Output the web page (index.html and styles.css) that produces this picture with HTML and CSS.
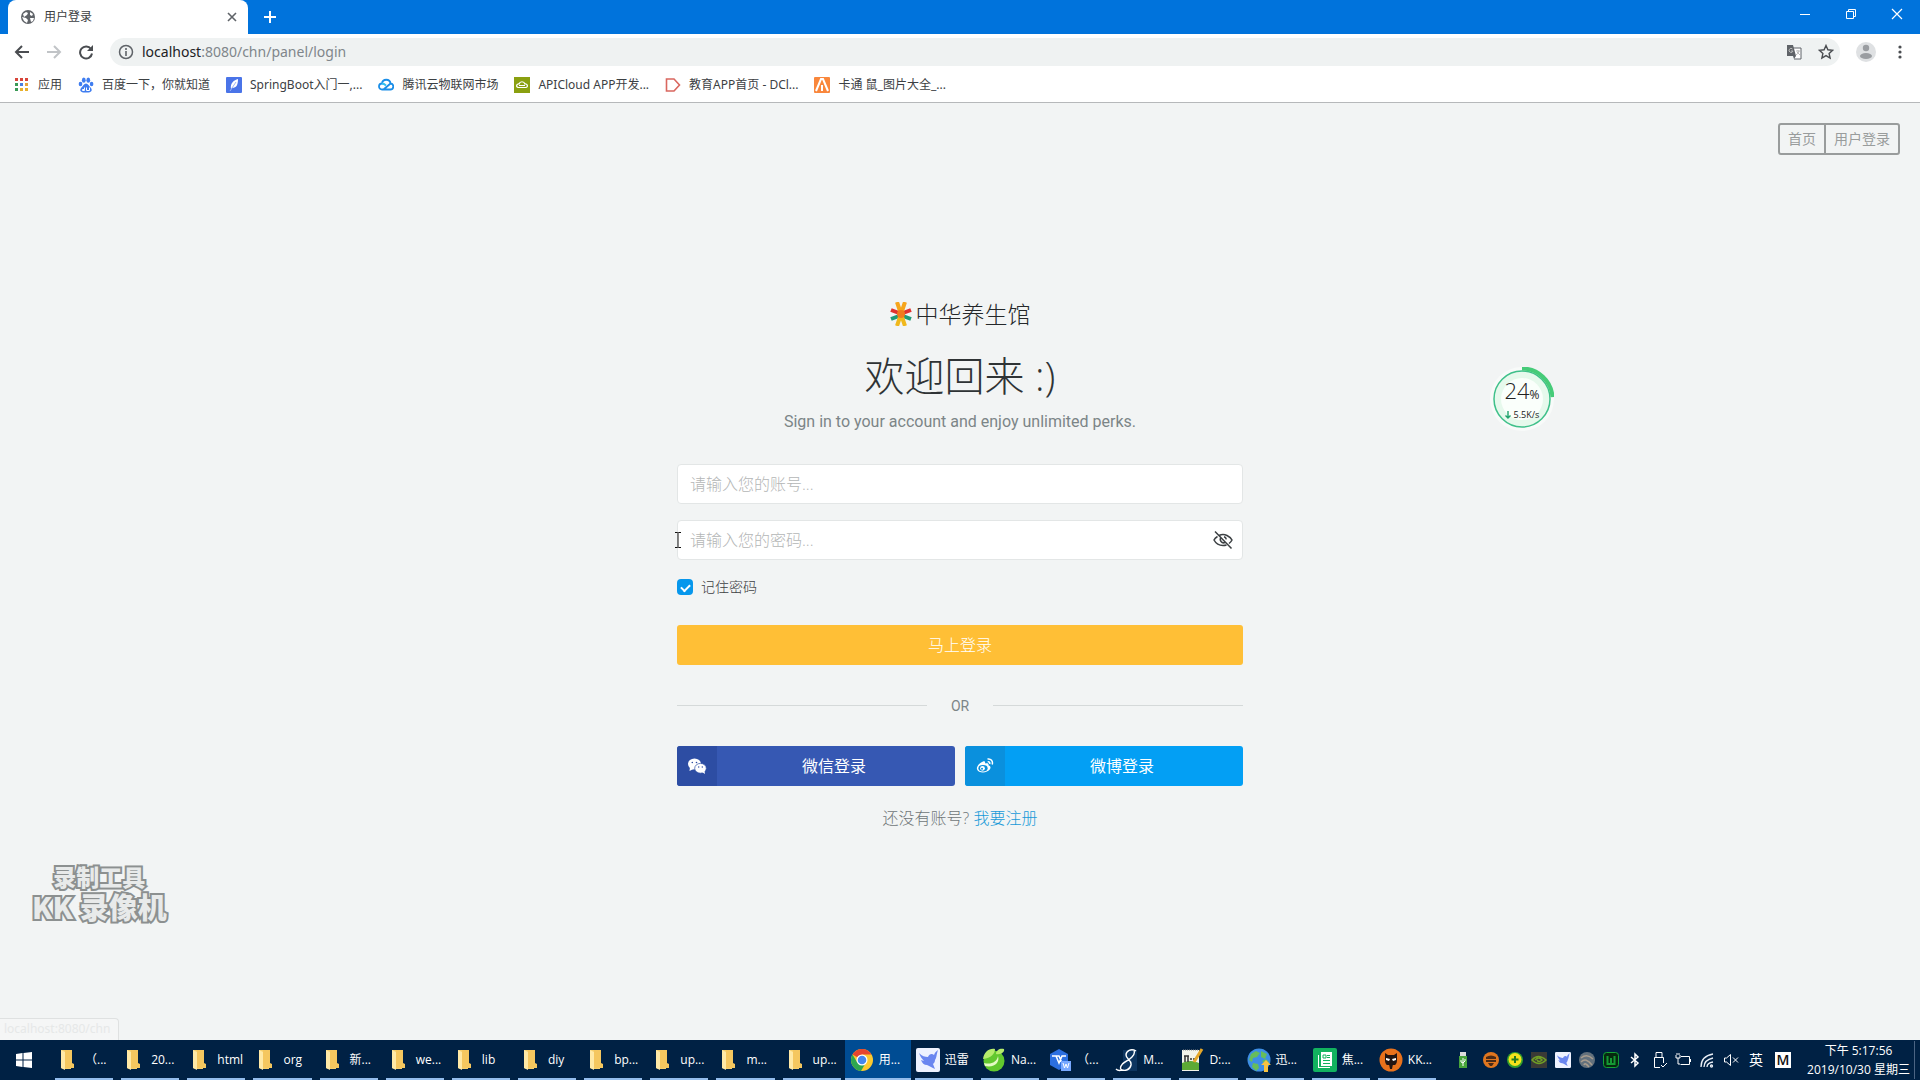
FILE: index.html
```html
<!DOCTYPE html>
<html lang="zh-CN">
<head>
<meta charset="utf-8">
<meta name="viewport" content="width=device-width, initial-scale=1">
<title>用户登录</title>
<link rel="stylesheet" href="styles.css">
</head>
<body>
<svg class="defs" aria-hidden="true">
  <symbol id="folder" viewBox="0 0 24 24"><path d="M5 2h10v19H8l-3-1z" fill="#f6cf6c"/><path d="M5 2l4 2v18l-4-2z" fill="#ffe9a6"/><path d="M9 4V2h7v13l2 1v4H9z" fill="#f5c75f"/></symbol>
  <symbol id="bird" viewBox="0 0 24 24"><rect width="24" height="24" rx="2" fill="#eef2ff"/><path d="M3 5c3 3 6 4 9 4 1-3 4-4 6-2 1-3 3-4 4-5-2 6-1 7-3 10 0 2-1 3-2 4l2 5c-3-1-5-3-8-4-3 0-5-2-6-5l3 1C6 11 4 8 3 5z" fill="#6a86f0"/></symbol>
  <symbol id="mask" viewBox="0 0 24 24"><circle cx="12" cy="12" r="11.500" fill="#e8721c"/><path d="M6 5l3 2h6l3-2v7c0 4-2 5-2 5H8s-2-1-2-5z" fill="#221512"/><path d="M7 10l4 1-1 2-3-1zM17 10l-4 1 1 2 3-1z" fill="#fff"/><path d="M10 16h4l-1 5h-2z" fill="#221512"/></symbol>
  <symbol id="mask-small" viewBox="0 0 16 16"><circle cx="8" cy="8" r="8" fill="#e0761f"/><path d="M3 5q5-3 10 0v2H3zM3 8h10v2H3zM5 11h6l-2 3H7z" fill="#4a2a16"/></symbol>
</svg>

<header class="browser">
  <div class="tabstrip">
    <div class="tab">
      <svg class="i16" viewBox="0 0 16 16"><circle cx="8" cy="8" r="7" fill="#5f6368"/><path d="M3 5l3-2 2 1-1 2-3 2zM2 8l4 1 2 2-1 3-3-2zM10 3l3 2-1 2-2-1zM10 9l4 0-1 3-2 1z" fill="#fff"/></svg>
      <span class="tab-title">用户登录</span>
      <button class="bare" type="button" aria-label="关闭标签页"><svg class="i16" viewBox="0 0 16 16"><path d="M4 4l8 8M12 4l-8 8" stroke="#5f6368" stroke-width="1.600"/></svg></button>
    </div>
    <button class="bare new-tab" type="button" aria-label="新标签页"><svg class="i16" viewBox="0 0 16 16"><path d="M8 2v12M2 8h12" stroke="#fff" stroke-width="2"/></svg></button>
    <div class="window-buttons">
      <button class="bare" type="button" aria-label="最小化"><svg class="i16" viewBox="0 0 16 16"><path d="M3 8.500h10" stroke="#fff"/></svg></button>
      <button class="bare" type="button" aria-label="还原"><svg class="i16" viewBox="0 0 16 16" fill="none" stroke="#fff"><path d="M3.500 5.500h7v7h-7zM5.500 5V3.500h7v7H11"/></svg></button>
      <button class="bare" type="button" aria-label="关闭"><svg class="i16" viewBox="0 0 16 16"><path d="M3 3l10 10M13 3L3 13" stroke="#fff" stroke-width="1.200"/></svg></button>
    </div>
  </div>
  <div class="toolbar">
    <button class="bare" type="button" aria-label="后退"><svg class="i16" viewBox="0 0 16 16" fill="none" stroke="#4a4d51" stroke-width="2"><path d="M15 8H2M8 2L2 8l6 6"/></svg></button>
    <button class="bare" type="button" aria-label="前进"><svg class="i16" viewBox="0 0 16 16" fill="none" stroke="#c1c4c7" stroke-width="2"><path d="M1 8h13M8 2l6 6-6 6"/></svg></button>
    <button class="bare" type="button" aria-label="刷新"><svg class="i16" viewBox="0 0 16 16"><path d="M13 5A6 6 0 1 0 14 9.500" fill="none" stroke="#4a4d51" stroke-width="2"/><path d="M15 1v6H9z" fill="#4a4d51"/></svg></button>
    <div class="omnibox">
      <svg class="i16" viewBox="0 0 16 16"><circle cx="8" cy="8" r="6.500" fill="none" stroke="#5f6368" stroke-width="1.500"/><path d="M8 7v5M8 4v2" stroke="#5f6368" stroke-width="1.600"/></svg>
      <span class="url">localhost<span class="url-path">:8080/chn/panel/login</span></span>
      <button class="bare" type="button" aria-label="翻译"><svg class="i16" viewBox="0 0 16 16"><path d="M7 4h8v11H8" fill="#fff" stroke="#5f6368"/><path d="M1 1h6l3 11H1z" fill="#5f6368"/><path d="M6.500 5A2 2 0 1 0 7 7H5M10 7h4M12 6v1M13 7q-1 3-3 4M11 8l3 3" fill="none" stroke="#bbb"/><path d="M7 12h3l-2 3z" fill="#5f6368"/></svg></button>
      <button class="bare" type="button" aria-label="收藏"><svg class="i16" viewBox="0 0 16 16"><path d="M8 1.500l1.900 4.300 4.700.5-3.500 3.100 1 4.600L8 11.600 3.900 14l1-4.600L1.400 6.300l4.700-.5z" fill="none" stroke="#4a4d51" stroke-width="1.400"/></svg></button>
    </div>
    <button class="bare" type="button" aria-label="个人资料"><svg class="i20" viewBox="0 0 20 20"><circle cx="10" cy="10" r="10" fill="#dfe1e3"/><circle cx="10" cy="6" r="3.200" fill="#9a9da1"/><ellipse cx="10" cy="14" rx="6" ry="3" fill="#9a9da1"/></svg></button>
    <button class="bare" type="button" aria-label="菜单"><svg class="i16" viewBox="0 0 16 16" fill="#4a4d51"><circle cx="8" cy="3" r="1.600"/><circle cx="8" cy="8" r="1.600"/><circle cx="8" cy="13" r="1.600"/></svg></button>
  </div>
  <nav class="bookmarks">
    <a href="#"><svg class="i16" viewBox="0 0 16 16"><path d="M1 1h3v3H1zM6 1h3v3H6zM11 1h3v3h-3z" fill="#d8453a"/><path d="M1 6h3v3H1z" fill="#3a9a56"/><path d="M6 6h3v3H6z" fill="#4a7fe0"/><path d="M11 6h3v3h-3z" fill="#e8a33a"/><path d="M1 11h3v3H1z" fill="#3a9a56"/><path d="M6 11h3v3H6zM11 11h3v3h-3z" fill="#e8b02c"/></svg><span>应用</span></a>
    <a href="#"><svg class="i16" viewBox="0 0 16 16" fill="#3f7df0"><ellipse cx="2.500" cy="7" rx="1.800" ry="2.300"/><ellipse cx="5.800" cy="3.200" rx="1.900" ry="2.600"/><ellipse cx="10.300" cy="3.200" rx="1.900" ry="2.600"/><ellipse cx="13.600" cy="7" rx="1.800" ry="2.300"/><path d="M8 6.500c2 0 3 2.500 5 4.500 2 3-.5 5-5 4.500C3.500 16 1 14 3 11c2-2 3-4.500 5-4.500z"/><path d="M4.500 12.500h2v-2M8.500 10.500v3h3v-3M4.500 12.500v1h2v-1" fill="none" stroke="#fff"/></svg><span>百度一下，你就知道</span></a>
    <a href="#"><svg class="i16" viewBox="0 0 16 16"><rect width="16" height="16" rx="1" fill="#4a74e8"/><path d="M5 12C4 6 8 3 12 2c0 5-1 9-6 9z" fill="#fff"/><path d="M4 14L10 5" stroke="#9db4f5"/></svg><span>SpringBoot入门一,...</span></a>
    <a href="#"><svg class="i16" viewBox="0 0 16 16" fill="none" stroke="#1a8ee8" stroke-width="1.800"><path d="M6 12.500h6a3 3 0 0 0 .5-6l-7 6H4a3 3 0 0 1 0-6c.5-5 8-5 8.500 0"/><path d="M4 6.500c2 0 3 1 4 2" stroke="#2fc0f0"/></svg><span>腾讯云物联网市场</span></a>
    <a href="#"><svg class="i16" viewBox="0 0 16 16"><rect width="16" height="16" fill="#8aa010"/><path d="M4 10.500a1.800 1.800 0 0 1 1-3.500c1-3 5-3 6 0a1.800 1.800 0 0 1 1 3.500zM5 8.500h6" fill="none" stroke="#fff" stroke-width="1.200"/></svg><span>APICloud APP开发...</span></a>
    <a href="#"><svg class="i16" viewBox="0 0 16 16"><path d="M1.500 2H9l5.500 6L9 14H1.500z" fill="none" stroke="#d9675f" stroke-width="1.600"/></svg><span>教育APP首页 - DCl...</span></a>
    <a href="#"><svg class="i16" viewBox="0 0 16 16"><rect width="16" height="16" rx="1" fill="#f9873c"/><path d="M2 14L7 2h2l5 12M8 8v6" fill="none" stroke="#fff" stroke-width="2"/></svg><span>卡通 鼠_图片大全_...</span></a>
  </nav>
</header>

<main class="page">
  <nav class="page-nav">
    <a href="#">首页</a><a href="#">用户登录</a>
  </nav>
  <form class="login">
    <div class="brand">
      <svg class="brand-mark" viewBox="0 0 22 24"><g stroke-width="4"><path d="M1 8l8 3M21 8l-8 3" stroke="#e0322f"/><path d="M1 17l8-3M21 17l-8-3" stroke="#1e9a78"/><path d="M7 0l3 9M15 0l-3 9" stroke="#f6a51c"/><path d="M7 24l3-9M15 24l-3-9" stroke="#f0b81c"/></g><circle cx="11" cy="12" r="4" fill="#f07a1e"/></svg>
      <span>中华养生馆</span>
    </div>
    <h1>欢迎回来 :)</h1>
    <p class="lead">Sign in to your account and enjoy unlimited perks.</p>
    <input class="field" type="text" placeholder="请输入您的账号..." aria-label="账号">
    <div class="password">
      <input class="field" type="password" placeholder="请输入您的密码..." aria-label="密码">
      <button class="bare reveal" type="button" aria-label="显示密码"><svg class="i20" viewBox="0 0 20 20" fill="none" stroke="#3c4043" stroke-width="1.500"><path d="M6 5.500Q10 3.500 14 5.500T19 10q-1 2-3 3.500M4.500 6.500Q2 8 1 10q3 5.500 9 5.500 2 0 3.500-.5"/><path d="M8 7.500a3.300 3.300 0 0 0 4 5M11 6.800a3.300 3.300 0 0 1 2.300 2.500M2 1.500l16.500 17"/></svg></button>
      <svg class="ibeam" viewBox="0 0 8 16" fill="none" stroke="#111"><path d="M1 .5h2.500L4 1l.5-.5H7M1 15.500h2.500L4 15l.5.500H7M4 1v14"/></svg>
    </div>
    <label class="remember"><input type="checkbox" checked><span>记住密码</span></label>
    <button class="submit" type="submit">马上登录</button>
    <div class="divider"><span>OR</span></div>
    <div class="social">
      <button class="social-button wechat" type="button"><span class="social-icon"><svg class="i20" viewBox="0 0 20 20"><ellipse cx="7.500" cy="8" rx="6.500" ry="5.500" fill="#fff"/><path d="M3 11l-.5 4 4-2z" fill="#fff"/><ellipse cx="13.500" cy="12.300" rx="5.800" ry="4.900" fill="#fff" stroke="#2d4da3" stroke-width=".7"/><path d="M15 16l3 2-.5-3z" fill="#fff"/><g fill="#2d4da3"><circle cx="5.300" cy="6.500" r=".8"/><circle cx="9.500" cy="6.500" r=".8"/><circle cx="11.700" cy="11" r=".7"/><circle cx="15.300" cy="11" r=".7"/></g></svg></span><span class="social-text">微信登录</span></button>
      <button class="social-button weibo" type="button"><span class="social-icon"><svg class="i20" viewBox="0 0 20 20"><path d="M8 5.500c1.500-.5 2.500.3 2 2 2-.7 4-.3 3.500 1.700 2 .6 2.500 2.300 1.500 4-2.500 4-11.500 4.500-13 0C1.200 10.500 5 6.500 8 5.500z" fill="#fff"/><ellipse cx="8" cy="12.200" rx="4.600" ry="3.300" fill="#0a90dd"/><circle cx="7.500" cy="12.300" r="2.400" fill="#fff"/><circle cx="7" cy="12.800" r="1" fill="#0a90dd"/><path d="M12.500 3c3.500-.6 5.700 2 4.700 5.500M12.700 5.800c1.600-.2 2.400.8 2 2.200" fill="none" stroke="#fff" stroke-width="1.500"/></svg></span><span class="social-text">微博登录</span></button>
    </div>
    <p class="signup">还没有账号? <a href="#">我要注册</a></p>
  </form>

  <aside class="meter">
    <svg class="meter-ring" viewBox="0 0 64 64"><circle cx="32" cy="32" r="32" fill="#f8faf9"/><circle cx="32" cy="32" r="28" fill="#e6f9ec" stroke="#3fc08a" stroke-width="1.500"/><circle cx="32" cy="32" r="21" fill="#fafffb"/><path d="M32 1.500A30.500 30.500 0 0 1 62.500 30" fill="none" stroke="#46cb78" stroke-width="4"/></svg>
    <div class="meter-text"><span class="meter-value">24<small>%</small></span><span class="meter-rate"><svg viewBox="0 0 6 8"><path d="M3 0v7M.5 4.500L3 7l2.500-2.500" fill="none" stroke="#1fa36b" stroke-width="1.400"/></svg>5.5K/s</span></div>
  </aside>
  <div class="watermark"><span>录制工具</span><span class="watermark-big">KK 录像机</span></div>
  <div class="status">localhost:8080/chn</div>
</main>

<footer class="taskbar">
  <button class="bare start" type="button" aria-label="开始"><svg class="i16" viewBox="0 0 16 16" fill="#fff"><path d="M0 2l6.500-1v6.500H0zM7.500 1L16 0v7.500H7.500zM0 8.500h6.500V15L0 14zM7.500 8.500H16V16l-8.500-1z"/></svg></button>
  <div class="tasks">
    <button type="button"><svg class="i24"><use href="#folder"/></svg><span>（...</span></button>
    <button type="button"><svg class="i24"><use href="#folder"/></svg><span>20...</span></button>
    <button type="button"><svg class="i24"><use href="#folder"/></svg><span>html</span></button>
    <button type="button"><svg class="i24"><use href="#folder"/></svg><span>org</span></button>
    <button type="button"><svg class="i24"><use href="#folder"/></svg><span>新...</span></button>
    <button type="button"><svg class="i24"><use href="#folder"/></svg><span>we...</span></button>
    <button type="button"><svg class="i24"><use href="#folder"/></svg><span>lib</span></button>
    <button type="button"><svg class="i24"><use href="#folder"/></svg><span>diy</span></button>
    <button type="button"><svg class="i24"><use href="#folder"/></svg><span>bp...</span></button>
    <button type="button"><svg class="i24"><use href="#folder"/></svg><span>up...</span></button>
    <button type="button"><svg class="i24"><use href="#folder"/></svg><span>m...</span></button>
    <button type="button"><svg class="i24"><use href="#folder"/></svg><span>up...</span></button>
    <button type="button" class="active"><svg class="i24" viewBox="0 0 24 24"><circle cx="12" cy="12" r="11" fill="#fbc92f"/><path d="M12 12L2.500 6.500A11 11 0 0 1 21.500 6.500H12z" fill="#e5452f"/><path d="M2.500 6.500A11 11 0 0 0 11 23l5-8.500L12 12 7 14z" fill="#2da650"/><circle cx="12" cy="12" r="5.500" fill="#fff"/><circle cx="12" cy="12" r="4.300" fill="#4587ee"/></svg><span>用...</span></button>
    <button type="button"><svg class="i24"><use href="#bird"/></svg><span>迅雷</span></button>
    <button type="button"><svg class="i24" viewBox="0 0 24 24"><circle cx="12" cy="13" r="10.500" fill="#62c82e"/><path d="M1 11C2 4 7 0 13 1c0 5-4 9-12 10zM14 6c0-4 4-6 8-5 1 3-3 6-8 5z" fill="#b5ec6c"/><path d="M2 15c7 2 13-1 14-7 2 6-3 12-13 10z" fill="#e4fac3"/></svg><span>Na...</span></button>
    <button type="button"><svg class="i24" viewBox="0 0 24 24"><path d="M11 1l9 5v11l-9 5-9-5V6z" fill="#2c6fe0"/><path d="M4 8h4l3 7 3-7h4M8 8l3 0 3 7" fill="none" stroke="#fff" stroke-width="1.500"/><rect x="13" y="13" width="10" height="10" fill="#78a8ff"/><path d="M15 15l1.500 5 1.500-4 1.500 4 1.500-5" fill="none" stroke="#fff"/></svg><span>（...</span></button>
    <button type="button"><svg class="i24" viewBox="0 0 24 24"><rect x="9" y="2" width="14" height="21" fill="#0d3560"/><path d="M22 3c-5-3-10 0-10 4s6 5 5 10-6 6-9 5-1-6 3-8S22 7 20 3M8 22c-3 1-5 0-6-1" fill="none" stroke="#fff" stroke-width="1.400"/></svg><span>M...</span></button>
    <button type="button"><svg class="i24" viewBox="0 0 24 24"><path d="M2 2h17v21H2z" fill="#f3f4ea"/><path d="M2 15q9-4 17 0v7H2z" fill="#5caa35"/><path d="M5 8v6M8 8v6M10 11h2M13 11h2M4 8h5" stroke="#333" stroke-width="1.500"/><path d="M22 1l-8 13" stroke="#e5a729" stroke-width="3"/><path d="M3 2h15" stroke="#888" stroke-dasharray="1 1"/></svg><span>D:...</span></button>
    <button type="button"><svg class="i24" viewBox="0 0 24 24"><circle cx="12" cy="12" r="11.500" fill="#3d8ee5"/><path d="M4 6l5-3 4 2-3 4-4 1-1 4-3-2zM14 3l6 3-2 5-4-2zM6 15l5 1 1 4-3 3-4-4zM15 13l4-2 3 3-3 3z" fill="#67bd5a"/><path d="M19 12l5 5h-3v7h-4v-7h-3z" fill="#f8c240"/></svg><span>迅...</span></button>
    <button type="button"><svg class="i24" viewBox="0 0 24 24"><rect width="24" height="24" rx="2" fill="#12b25f"/><path d="M8 4h11v14H8zM6 7v12h11v1H5V7z" fill="#fff"/><path d="M10 7h3v3h-3zM14 7.500h3M14 9.500h3M10 12.500h7M10 15.500h7" fill="none" stroke="#12b25f"/></svg><span>焦...</span></button>
    <button type="button"><svg class="i24"><use href="#mask"/></svg><span>KK...</span></button>
  </div>
  <div class="tray">
    <svg class="i16 usb" viewBox="0 0 16 16"><path d="M5 0h6v4H5z" fill="#ddd"/><path d="M4 4h8v12H4z" fill="#48a43c"/><path d="M8 6v8M6 8v2l2 1 2-2V7" fill="none" stroke="#fff"/></svg>
    <svg class="i16"><use href="#mask-small"/></svg>
    <svg class="i16" viewBox="0 0 16 16"><circle cx="8" cy="8" r="8" fill="#35a02c"/><circle cx="8" cy="7.500" r="6.500" fill="#f5e21c"/><path d="M8 4v7M4.500 7.500h7" stroke="#247a1e" stroke-width="2"/></svg>
    <svg class="i16" viewBox="0 0 16 16"><rect width="16" height="16" fill="#3a3a36"/><path d="M1 8q6-7 14 0-7 7-14 0zM4 8q4-4 7 0-3 3-5 0" fill="none" stroke="#6f9e26" stroke-width="1.500"/></svg>
    <svg class="i16"><use href="#bird"/></svg>
    <svg class="i16" viewBox="0 0 16 16"><circle cx="8" cy="8" r="8" fill="#63717d"/><path d="M2 6q6-5 12 1M2 10q5-5 11 3M5 13q1-3 5 2" fill="none" stroke="#a89c8e" stroke-width="1.500"/></svg>
    <svg class="i16" viewBox="0 0 16 16"><rect x=".5" y=".5" width="15" height="15" rx="3" fill="#06290f" stroke="#15a436"/><path d="M4.500 4v8h7V4M8 6v6" fill="none" stroke="#149a34" stroke-width="2"/></svg>
    <svg class="i16" viewBox="0 0 16 16" fill="none" stroke="#fff" stroke-width="1.500"><path d="M4 5l7 6-3 3V2l3 3-7 6"/></svg>
    <svg class="i16" viewBox="0 0 16 16" fill="none" stroke="#fff"><path d="M5 5V.500h6V5M3.500 5.500h9V11M3.500 5.500v10H9M10 13l2 2 4-4"/></svg>
    <svg class="i16" viewBox="0 0 16 16" fill="none" stroke="#fff"><path d="M6 4.500h8.500v8H5.500M15.500 7v3M1 3v3h4V3M2 1v2M4 1v2M3 6v6h2"/></svg>
    <svg class="i16" viewBox="0 0 16 16" fill="none" stroke="#e8eef5" stroke-width="1.300"><path d="M2 15Q2 4 14 2M5 15q0-7 9-9M8 15q0-4 6-5"/><circle cx="12.500" cy="14" r="1"/></svg>
    <svg class="i16" viewBox="0 0 16 16" fill="none" stroke="#fff"><path d="M1.500 6v4h2l4 3.500v-11L3.500 6zM10 5.500l5 5M15 5.500l-5 5"/></svg>
    <span class="ime">英</span>
    <span class="ime-mode">M</span>
    <div class="clock"><span>下午 5:17:56</span><span>2019/10/30 星期三</span></div>
  </div>
</footer>
</body>
</html>
```
FILE: styles.css
```css
* { box-sizing: border-box; }

body {
  margin: 0;
  min-height: 100vh;
  display: flex;
  flex-direction: column;
  font-family: "Noto Sans", "Noto Sans CJK SC", sans-serif;
  font-size: 12px;
  line-height: 16px;
  color: #3c4043;
  background: #f2f4f4;
}

a { color: inherit; text-decoration: none; }
svg { display: block; flex: none; }
button { font: inherit; color: inherit; border: 0; cursor: pointer; }
.bare { display: flex; padding: 0; background: none; }
.defs { position: absolute; width: 0; height: 0; }
.i16 { width: 16px; height: 16px; }
.i20 { width: 20px; height: 20px; }
.i24 { width: 24px; height: 24px; }

/* Browser chrome */
.browser { background: #fff; border-bottom: 1px solid #b6b8ba; }

.tabstrip {
  display: flex;
  align-items: center;
  height: 34px;
  padding: 0 15px 0 8px;
  background: #0073dc;
}
.tab {
  display: flex;
  align-items: center;
  gap: 8px;
  width: 240px;
  height: 34px;
  padding: 0 8px 0 12px;
  background: #fff;
  border-radius: 8px 8px 0 0;
}
.tab-title { flex: 1; }
.new-tab { margin-left: 14px; }
.window-buttons { display: flex; gap: 30px; margin: 0 0 6px auto; }

.toolbar {
  display: flex;
  align-items: center;
  gap: 16px;
  height: 36px;
  padding: 0 12px 0 14px;
}
.omnibox {
  flex: 1;
  display: flex;
  align-items: center;
  gap: 16px;
  height: 28px;
  padding: 0 6px 0 8px;
  border-radius: 14px;
  background: #eff2f2;
}
.url { flex: 1; margin-left: -8px; font-size: 14px; line-height: 20px; color: #202124; }
.url-path { color: #80868b; }

.bookmarks { display: flex; align-items: center; gap: 16px; height: 32px; padding: 0 14px 2px; }
.bookmarks a { display: flex; align-items: center; gap: 8px; white-space: nowrap; }

/* Page */
.page {
  position: relative;
  flex: 1;
  display: flex;
  flex-direction: column;
  align-items: center;
  justify-content: center;
  padding-bottom: 16px;
}
.page-nav {
  position: absolute;
  top: 20px;
  right: 20px;
  display: flex;
  border: 2px solid #999c9c;
  border-radius: 3px;
  font-size: 14px;
  line-height: 28px;
  color: #999c9c;
}
.page-nav a { padding: 0 8px; }
.page-nav a + a { border-left: 2px solid #999c9c; }

.login {
  display: flex;
  flex-direction: column;
  width: 100%;
  max-width: 566px;
  font-family: "Open Sans", "Noto Sans CJK SC", sans-serif;
  font-weight: 300;
}
.brand {
  display: flex;
  align-items: center;
  justify-content: center;
  gap: 4px;
  font-size: 23px;
  line-height: 32px;
  color: #25282a;
}
.brand-mark { width: 22px; height: 24px; }
h1 {
  margin: 16px 0 6px;
  font-size: 40px;
  font-weight: 300;
  line-height: 60px;
  text-align: center;
  color: #2f3335;
}
.lead {
  margin: 0 0 32px;
  font-family: Roboto, sans-serif;
  font-size: 16px;
  font-weight: 400;
  line-height: 20px;
  text-align: center;
  color: #7c8587;
}
.field {
  width: 100%;
  height: 40px;
  padding: 0 12px;
  border: 1px solid #e3e6e6;
  border-radius: 4px;
  background: #fff;
  font: inherit;
  font-size: 16px;
  color: #3c4043;
}
.field::placeholder { color: #b4b6b6; }
.password { position: relative; margin-top: 16px; }
.reveal { position: absolute; top: 10px; right: 10px; }
.ibeam { position: absolute; top: 12px; left: -3px; width: 8px; height: 16px; }

.remember {
  display: flex;
  align-items: center;
  align-self: flex-start;
  gap: 8px;
  margin-top: 15px;
  font-size: 14px;
  line-height: 24px;
}
.remember input {
  appearance: none;
  width: 16px;
  height: 16px;
  margin: 0;
  border-radius: 4px;
  background: #0797ec;
  display: grid;
  place-items: center;
}
.remember input:checked::before {
  content: "";
  width: 7px;
  height: 4px;
  border: solid #fff;
  border-width: 0 0 2px 2px;
  transform: rotate(-45deg);
}
.submit {
  height: 40px;
  margin-top: 26px;
  border-radius: 3px;
  background: #ffbf36;
  font-size: 16px;
  color: #fff;
}
.divider {
  display: flex;
  align-items: center;
  gap: 24px;
  margin: 31px 0 30px;
  font-family: Roboto, sans-serif;
  font-size: 14px;
  font-weight: 400;
  line-height: 20px;
  color: #7c8587;
}
.divider::before, .divider::after { content: ""; flex: 1; height: 1px; background: #d5d9d9; }
.social { display: grid; grid-template-columns: 1fr 1fr; gap: 10px; }
.social-button {
  display: flex;
  height: 40px;
  padding: 0;
  border-radius: 3px;
  overflow: hidden;
  font-size: 16px;
  font-weight: 400;
  line-height: 40px;
  color: #fff;
}
.social-icon { display: grid; place-items: center; width: 40px; height: 40px; }
.social-text { flex: 1; padding-right: 4px; }
.wechat { background: #3658b3; }
.wechat .social-icon { background: #2d4da3; }
.weibo { background: #039ff4; }
.weibo .social-icon { background: #0a90dd; }
.signup { margin: 20px 0 0; font-size: 16px; line-height: 24px; text-align: center; color: #6f7678; }
.signup a { color: #1699d8; }

/* Floating desktop overlays */
.meter {
  position: absolute;
  left: 1490px;
  top: 264px;
  width: 64px;
  height: 64px;
  font-family: "Open Sans", sans-serif;
}
.meter-ring { width: 64px; height: 64px; }
.meter-text {
  position: absolute;
  inset: 0;
  display: flex;
  flex-direction: column;
  align-items: center;
  justify-content: center;
  gap: 2px;
  color: #222;
}
.meter-value { font-size: 22px; font-weight: 300; line-height: 24px; }
.meter-value small { font-size: 12px; font-weight: 400; }
.meter-rate { display: flex; align-items: center; gap: 3px; font-size: 9px; line-height: 12px; }
.meter-rate svg { width: 6px; height: 8px; }

.watermark {
  position: absolute;
  left: 32px;
  bottom: 119px;
  display: flex;
  flex-direction: column;
  align-items: center;
  font-family: "Noto Sans CJK SC", sans-serif;
  font-size: 23px;
  font-weight: 900;
  line-height: 30px;
  color: #e8eaea;
  -webkit-text-stroke: 4px #8c9090;
  paint-order: stroke fill;
}
.watermark-big { font-size: 29px; }

.status {
  position: absolute;
  left: 0;
  bottom: 0;
  width: 119px;
  height: 22px;
  padding: 2px 4px;
  border: 1px solid #dfe1e1;
  border-width: 1px 1px 0 0;
  border-radius: 0 4px 0 0;
  background: #f5f6f6;
  color: #e6e8e8;
}

/* Taskbar */
.taskbar {
  display: flex;
  height: 40px;
  background: #002144;
  font-family: "Open Sans", "Noto Sans CJK SC", sans-serif;
  color: #fff;
}
.start { width: 51px; align-items: center; padding-left: 16px; }
.tasks { flex: 1; display: flex; min-width: 0; }
.tasks button {
  position: relative;
  flex: 1 1 0;
  min-width: 0;
  display: flex;
  align-items: center;
  gap: 5px;
  padding: 0 0 0 5px;
  background: none;
  white-space: nowrap;
}
.tasks button::after {
  content: "";
  position: absolute;
  left: 4px;
  right: 4px;
  bottom: 0;
  height: 2px;
  background: #94bdec;
}
.tasks .active { background: #004c93; }
.tasks .active::after { left: 0; right: 0; }

.tray { display: flex; align-items: center; gap: 8px; padding: 0 5px 0 15px; }
.usb { margin-right: 4px; }
.ime { width: 18px; font-size: 14px; text-align: center; }
.ime-mode {
  width: 16px;
  margin: 0 4px 0 2px;
  background: #fff;
  color: #111;
  font-size: 14px;
  font-weight: 600;
  text-align: center;
}
.clock {
  display: flex;
  flex-direction: column;
  align-items: center;
  width: 112px;
  border-right: 1px solid #4b6483;
  line-height: 19px;
  white-space: nowrap;
}
```
